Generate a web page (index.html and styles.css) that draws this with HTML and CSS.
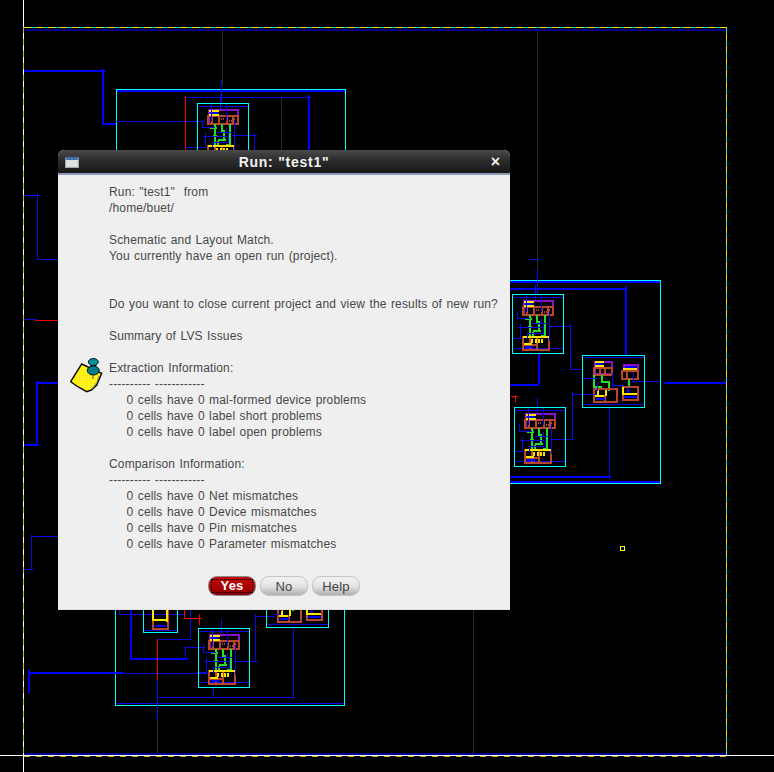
FILE: index.html
```html
<!DOCTYPE html>
<html lang="en">
  <head>
    <title>Run: "test1"</title>
    <meta http-equiv="Content-Type" content="text/html;charset=UTF-8">
    <link rel="stylesheet" href="styles.css">
  </head>
  <body>
    <!-- Layout canvas -->
    <svg class="canvas" width="774" height="772" viewBox="0 0 774 772">
      <defs>
        <!-- Small cell, 52 x 60 -->
        <g id="cell">
          <path class="dim" d="M1.5 3.5H51M1.5 54.5H51"/>
          <rect class="purple" x="11.5" y="6.5" width="29" height="14"/>
          <path class="blue" d="M13 9.5H21"/>
          <path class="brown" d="M11 13H41V21H11ZM15 13V21M22 13V21M30 13V21M36 13V21"/>
          <path class="yellow-bar" d="M12 8H22M12 12H22"/>
          <path class="red-dots" d="M24 16H28M32 18H35M37 16H39"/>
          <path class="green" d="M18 21V43M33 21V43M27 27V37M25 21V30M13 25H20M21 37H29M29 42H33M21 38V43M16 33H20"/>
          <path class="brown" d="M11 43H37V56H11ZM18 43V56M25 43V56M11 51H25"/>
          <path class="yellow-bar" d="M11 43H38M20 45V49M24 45V49M27 45V49M30 45V49M12 49.5H20"/>
          <path class="blue" d="M13 53H21"/>
          <path class="dim" d="M23.5 -9V6M14.5 0V18M29.5 0V18M5.5 17V24.5H18M37.5 17V47M8.5 30V44.5H-1M6 33.5H29.5M15.5 45V39.5H31V30M29.5 24.5V30M34 29.5H20"/>
          <rect class="cyan" x="0.5" y="0.5" width="51" height="59"/>
        </g>
        <!-- Wide cell, 63 x 52 -->
        <g id="wide-cell">
          <rect class="purple" x="12.5" y="6.5" width="17" height="12"/>
          <path class="brown" d="M12 13H30V20H12ZM18 13V20M23 13V20"/>
          <path class="yellow-bar" d="M13 7H22M13 11H22"/>
          <path class="blue" d="M14 9H21"/>
          <path class="green" d="M12 20V32H20M20 20V27H27V36"/>
          <path class="brown" d="M12 34H35V47H12ZM23 40V47M12 47H23"/>
          <path class="yellow-bar" d="M16 35V41M24 35V41M13 41H22"/>
          <path class="blue" d="M14 44H23"/>
          <rect class="purple" x="41.5" y="9.5" width="14" height="6"/>
          <path class="brown" d="M40 16H56V24H40ZM45 16V24"/>
          <path class="yellow-bar" d="M41 14H55"/>
          <path class="blue" d="M43 11.5H54"/>
          <path class="green" d="M47 24V31"/>
          <path class="brown" d="M41 32H56V45H41Z"/>
          <path class="yellow-bar" d="M41 32V39H55"/>
          <path class="blue" d="M46 33V38M42 41.5H55"/>
          <path class="dim" d="M1.5 2.5H62M1.5 49.5H62M15 23.5H1M15 36V27M15 39.5H8M30 18V34M30 30H42M51 18V28"/>
          <rect class="cyan" x="0.5" y="0.5" width="62" height="52"/>
        </g>
      </defs>

      <!-- Faint construction lines -->
      <path class="faint" d="M222.5 30V85M537.5 30V270M473.5 610V753M157.5 720V753M187 97H281V150M157 697H293"/>

      <!-- Frame -->
      <path class="navy" d="M24 29.5H726M24 753.5H726"/>
      <path class="frame-cyan" d="M24 27.5H726V755"/>
      <path class="frame-dash" d="M24 27.5H726V755"/>
      <path class="white" d="M23.5 0V772M0 755.5H774"/>
      <path class="frame-dash-left" d="M23.5 27V755M24 756.5H726"/>

      <!-- Top block -->
      <rect class="cyan" x="116.5" y="89.5" width="229" height="80"/>
      <path class="blue" d="M117 91H345M24 71H105M103 69V123.5H116"/>
      <path class="dim" d="M116 121.5H205M185 97.5H311M221.5 80V103M232 135.5H257M254.5 133V150M185 147.5H200"/>
      <path class="blue" d="M309 95V150"/>
      <path class="red" d="M185.5 96V150"/>
      <use href="#cell" x="197" y="103"/>

      <!-- Left stubs -->
      <path class="dim" d="M24 195.5H40M37.5 194V259.5H58M24 319.5H37M31 536.5H58M31.5 535V569.5M24 569.5H34"/>
      <path class="red" d="M35 320.5H58"/>
      <path class="blue" d="M36 383H58M37 381V445M24 444.5H39"/>

      <!-- Right block -->
      <rect class="cyan" x="480.5" y="280.5" width="180" height="203"/>
      <path class="blue" d="M510 282H660M510 288.5H626M625.5 286V355M510 384.5H539M538.5 354V384M510 476.5H611M510 482H660M664 382.5H726"/>
      <path class="dim" d="M537.5 270V294M548 326.5H571M570.5 324V369.5H583M550 439.5H573M572.5 392V439M572 394.5H595M632 381.5H660M609.5 407V477M529 259.5H539"/>
      <path class="red" d="M511 396.5H518M515.5 395V403"/>
      <use href="#cell" x="512" y="294"/>
      <use href="#cell" x="514" y="407"/>
      <use href="#wide-cell" x="582" y="355"/>
      <rect class="yellow" x="620.5" y="546.5" width="4" height="4"/>

      <!-- Bottom block -->
      <rect class="cyan" x="115.5" y="560" width="229" height="145.5"/>
      <path class="dim" d="M116 703.5H344M119.5 610V614.5H185M157.5 680V720M157 639.5H191M190.5 610V640M185.5 646V658M185 647.5H205M203.5 646V653M121 673.5H207M255.5 614V661.5M234 661.5H258M255 616.5H275M293.5 627V697M157 697.5H295M213.5 688V697"/>
      <path class="blue" d="M131 610V659H188M28 672.5H124M28.5 670V693"/>
      <path class="red" d="M157.5 639V680M184.5 610V618.5H202M199.5 614V625"/>
      <rect class="cyan" x="143.5" y="560" width="34" height="72.5"/>
      <path class="dim" d="M144 630.5H177"/>
      <path class="brown" d="M153 610V629H168V610"/>
      <path class="yellow-bar" d="M153 610V620H167M167 610V622"/>
      <path class="blue" d="M155 625.5H166"/>
      <use href="#wide-cell" x="266" y="575"/>
      <use href="#cell" x="198" y="628"/>
    </svg>

    <!-- Dialog -->
    <div class="dialog">
      <div class="titlebar">
        <span class="window-icon"></span>
        <span class="title">Run: "test1"</span>
        <span class="close">×</span>
      </div>
      <div class="dialog-body">
        <div class="message">
          <svg class="note-icon" width="33" height="35" viewBox="0 0 33 35">
            <defs>
              <pattern id="dither" width="2" height="2" patternUnits="userSpaceOnUse">
                <rect width="2" height="2" fill="#ffee00"/>
                <rect width="1" height="1" fill="#fff860"/>
              </pattern>
            </defs>
            <path d="M0.7 23.7L11.7 6L31.7 15.3L26.7 27L21.7 32L16.7 33.7L6.7 28Z" fill="url(#dither)" stroke="#000" stroke-width="1.4"/>
            <path d="M22 31L27 24L29 18" fill="none" stroke="#8a8a30"/>
            <path d="M23.3 5V11" stroke="#024" stroke-width="6"/>
            <ellipse cx="23.3" cy="12.5" rx="6" ry="4.5" fill="#067c88" stroke="#012"/>
            <ellipse cx="23.3" cy="4" rx="5" ry="3.5" fill="#089098" stroke="#012"/>
            <path d="M23 17V21" stroke="#555"/>
          </svg>
          <pre class="message-text">Run: "test1"  from
/home/buet/

Schematic and Layout Match.
You currently have an open run (project).


Do you want to close current project and view the results of new run?

Summary of LVS Issues

Extraction Information:
---------- ------------
    0 cells have 0 mal-formed device problems
    0 cells have 0 label short problems
    0 cells have 0 label open problems

Comparison Information:
---------- ------------
    0 cells have 0 Net mismatches
    0 cells have 0 Device mismatches
    0 cells have 0 Pin mismatches
    0 cells have 0 Parameter mismatches</pre>
        </div>
        <div class="buttons">
          <button class="btn btn-default"><span class="btn-focus">Yes</span></button>
          <button class="btn">No</button>
          <button class="btn">Help</button>
        </div>
      </div>
    </div>
  </body>
</html>
```

FILE: styles.css
```css
* {
  box-sizing: border-box;
}
html, body {
  margin: 0;
}
body {
  position: relative;
  width: 774px;
  height: 772px;
  overflow: hidden;
  background-color: #000;
  font-family: "Liberation Sans", sans-serif;
}

/* Canvas */
.canvas {
  position: absolute;
  top: 0;
  left: 0;
  display: block;
  shape-rendering: crispEdges;
}
.canvas path, .canvas rect {
  fill: none;
  stroke-width: 1;
}
.canvas .blue { stroke: #0000ff; stroke-width: 2; }
.canvas .dim { stroke: #0a0ae0; }
.canvas .navy { stroke: #00008c; stroke-width: 2; }
.canvas .faint { stroke: #2b2b2b; }
.canvas .cyan { stroke: #00ffff; }
.canvas .red { stroke: #f00000; }
.canvas .white { stroke: #fff; }
.canvas .purple { stroke: #8a10d0; stroke-width: 2; }
.canvas .brown { stroke: #b8452e; stroke-width: 2; }
.canvas .yellow { stroke: #ffff00; }
.canvas .yellow-bar { stroke: #ffe400; stroke-width: 2; }
.canvas .red-dots { stroke: #b8452e; stroke-width: 2; stroke-dasharray: 1 1; }
.canvas .green { stroke: #22e02a; stroke-width: 2; }
.canvas .frame-cyan { stroke: #00e0e0; }
.canvas .frame-dash { stroke: #ffe000; stroke-dasharray: 7 5; }
.canvas .frame-dash-left { stroke: #c8b400; stroke-dasharray: 6 6; }

/* Dialog */
.dialog {
  position: absolute;
  top: 150px;
  left: 58px;
  width: 452px;
  height: 460px;
  display: flex;
  flex-direction: column;
  background-color: #efefef;
  border-radius: 6px 6px 0 0;
  overflow: hidden;
}
.titlebar {
  position: relative;
  height: 25px;
  flex-shrink: 0;
  display: flex;
  align-items: center;
  justify-content: center;
  background: linear-gradient(#4a4a4a 0, #2c2c2c 45%, #191919 100%);
  border-bottom: 2px solid #8d9db5;
  color: #f2f2f2;
}
.title {
  font-size: 14px;
  font-weight: bold;
  letter-spacing: 0.75px;
}
.window-icon {
  position: absolute;
  top: 7px;
  left: 7px;
  width: 14px;
  height: 11px;
  background-color: #dfe2dc;
  border: 1px solid #9aa;
  border-top: 3px solid #4a72a8;
}
.close {
  position: absolute;
  top: 2px;
  right: 10px;
  font-size: 16px;
  font-weight: bold;
  line-height: 20px;
  color: #eee;
}
.dialog-body {
  flex-grow: 1;
  display: flex;
  flex-direction: column;
  padding-top: 9px;
  border-bottom: 1px solid #e2e2e2;
}
.message {
  display: flex;
  align-items: flex-start;
  gap: 6px;
  padding-left: 12px;
}
.note-icon {
  flex-shrink: 0;
  margin-top: 174px;
}
.message-text {
  margin: 0;
  font-family: "Liberation Sans", sans-serif;
  font-size: 12px;
  line-height: 16px;
  letter-spacing: 0.15px;
  word-spacing: 0.9px;
  color: #484848;
}
.buttons {
  display: flex;
  justify-content: center;
  gap: 4px;
  margin-top: 24px;
}
.btn {
  width: 48px;
  height: 20px;
  padding: 0;
  border: 1px solid #c4c4c4;
  border-radius: 9px;
  background: linear-gradient(#f2f2f2 0, #e4e4e4 50%, #b0b0b0 100%);
  font-family: "Liberation Sans", sans-serif;
  font-size: 13px;
  letter-spacing: 0.2px;
  color: #444;
}
.btn-default {
  display: flex;
  align-items: center;
  justify-content: center;
  border-color: #8c8c8c;
  background: linear-gradient(#c40808 0, #a80000 60%, #860000 100%);
  color: #fff;
  font-weight: bold;
}
.btn-focus {
  width: 42px;
  height: 14px;
  line-height: 12px;
  border: 1px dotted #000;
}
```
